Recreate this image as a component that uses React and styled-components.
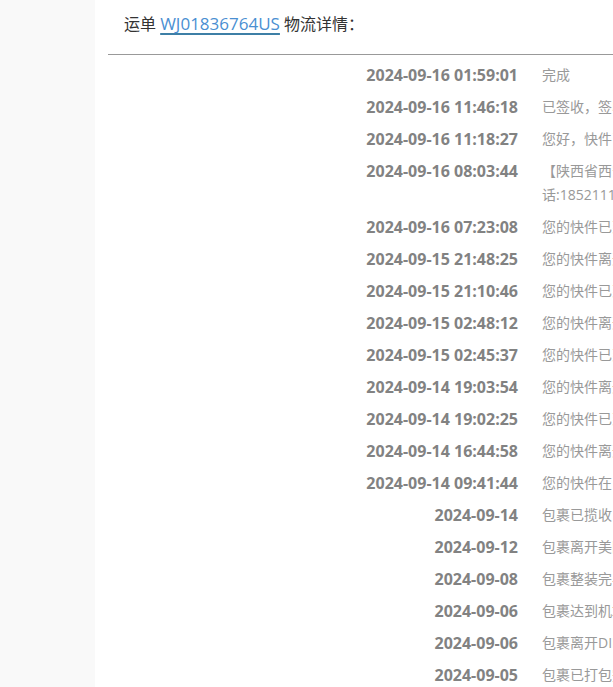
import React from "react";
import styled, { createGlobalStyle } from "styled-components";

const trackNo = "WJ01836764US";

const traces = [
  { time: "2024-09-16 01:59:01", text: "完成" },
  { time: "2024-09-16 11:46:18", text: "已签收，签收人凭取货码签收。感谢使用，期待再次为您服务。" },
  { time: "2024-09-16 11:18:27", text: "您好，快件已放在菜鸟驿站，请凭取件码及时领取。" },
  { time: "2024-09-16 08:03:44", text: "【陕西省西安市雁塔区】您的快件正在派送中，派送员：张师傅，电话:18521116032，请保持电话畅通" },
  { time: "2024-09-16 07:23:08", text: "您的快件已到达【西安雁塔营业部】" },
  { time: "2024-09-15 21:48:25", text: "您的快件离开【西安转运中心】，已发往【西安雁塔营业部】" },
  { time: "2024-09-15 21:10:46", text: "您的快件已到达【西安转运中心】" },
  { time: "2024-09-15 02:48:12", text: "您的快件离开【上海转运中心】，已发往【西安转运中心】" },
  { time: "2024-09-15 02:45:37", text: "您的快件已到达【上海转运中心】" },
  { time: "2024-09-14 19:03:54", text: "您的快件离开【上海浦东营业部】，已发往【上海转运中心】" },
  { time: "2024-09-14 19:02:25", text: "您的快件已到达【上海浦东营业部】" },
  { time: "2024-09-14 16:44:58", text: "您的快件离开【上海浦东机场】，已发往【上海浦东营业部】" },
  { time: "2024-09-14 09:41:44", text: "您的快件在【上海浦东国际机场】已完成清关" },
  { time: "2024-09-14", text: "包裹已揽收，交由国内快递派送" },
  { time: "2024-09-12", text: "包裹离开美国洛杉矶，运往中国上海" },
  { time: "2024-09-08", text: "包裹整装完毕，等待航班起飞" },
  { time: "2024-09-06", text: "包裹达到机场，等待安排航班" },
  { time: "2024-09-06", text: "包裹离开DIL仓库，运往机场" },
  { time: "2024-09-05", text: "包裹已打包完毕，准备发往机场" },
  { time: "2024-09-05", text: "包裹已入库" },
  { time: "2024-09-04", text: "订单已创建" },
];

const GlobalStyle = createGlobalStyle`
  html, body {
    margin: 0;
    padding: 0;
    background: #f9f9f9;
    overflow: hidden;
  }
  body {
    font-family: "Open Sans", "Noto Sans CJK SC", sans-serif;
  }
`;

function App() {
  return (
    <>
      <GlobalStyle />
      <Page>
        <Main>
          <Heading>
            运单 <TrackLink href="#">{trackNo}</TrackLink> 物流详情：
          </Heading>
          <TraceList>
            {traces.map((t, i) => (
              <TraceRow key={i}>
                <TraceTime>{t.time}</TraceTime>
                <TraceText>{t.text}</TraceText>
              </TraceRow>
            ))}
          </TraceList>
        </Main>
      </Page>
    </>
  );
}

export default App;

const Page = styled.div`
  min-height: 100vh;
  padding-left: 95px;
`;

const Main = styled.div`
  background: #fff;
  min-height: 100vh;
  padding-left: 13px;
`;

const Heading = styled.div`
  padding: 12px 0 18px 16px;
  font-size: 16px;
  line-height: 24px;
  color: #333;
  white-space: nowrap;
`;

const TrackLink = styled.a`
  font-size: 17px;
  color: #4a8fd2;
  text-decoration: underline 2px #3d7fa6;
  text-underline-offset: 3px;
`;

const TraceList = styled.div`
  border-top: 1px solid #999;
  padding-top: 4px;
  width: 1000px;
`;

const TraceRow = styled.div`
  display: grid;
  grid-template-columns: 410px 426px;
  column-gap: 24px;
  padding: 4px 0;
  line-height: 24px;
`;

const TraceTime = styled.div`
  text-align: right;
  font-weight: 700;
  font-size: 16px;
  color: #828282;
  white-space: nowrap;
`;

const TraceText = styled.div`
  font-size: 14px;
  color: #999;
`;
